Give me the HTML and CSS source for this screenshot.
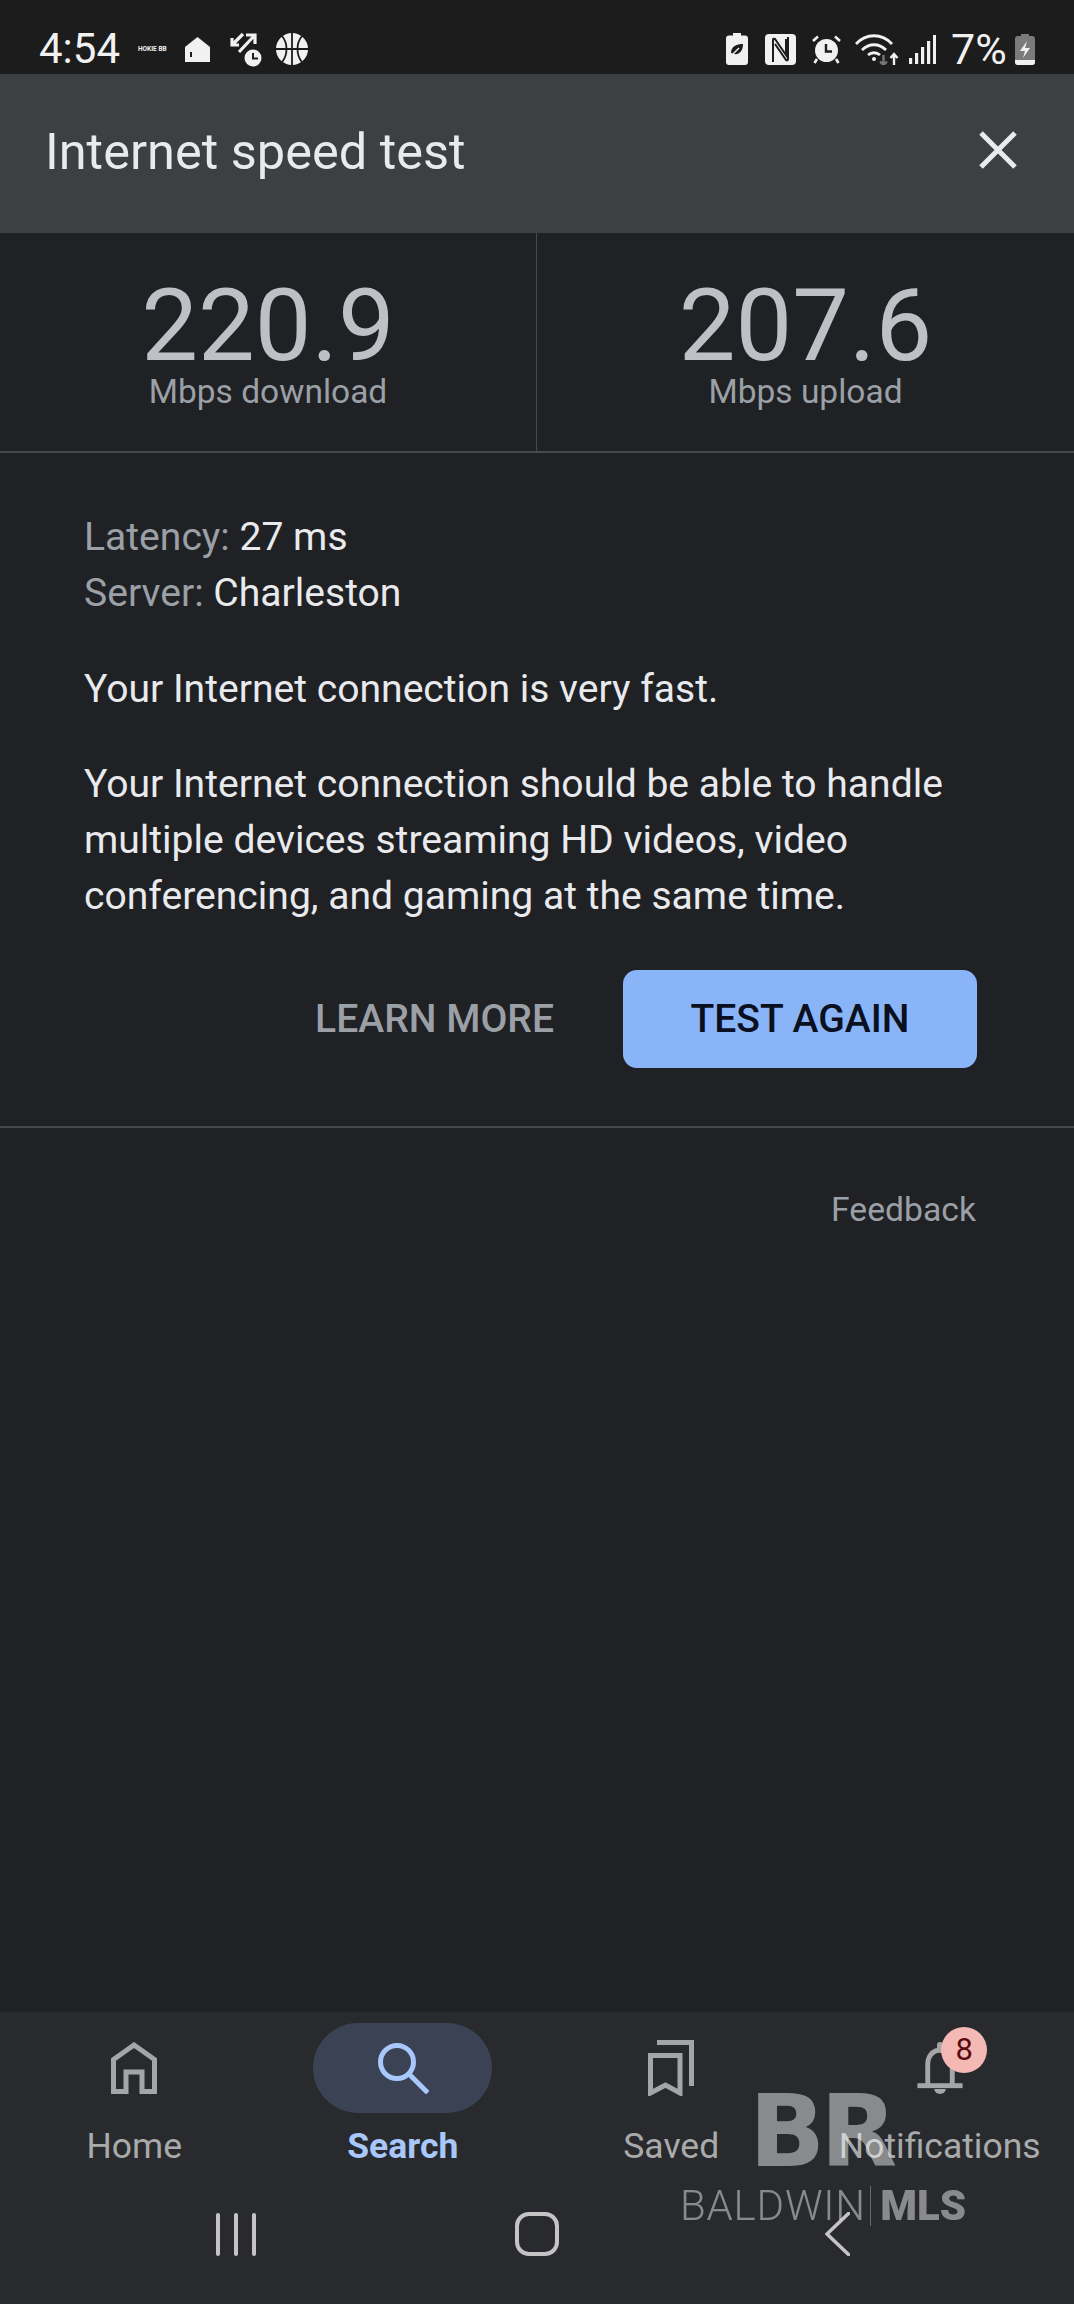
FILE: index.html
```html
<!DOCTYPE html>
<html>
<head>
<meta charset="utf-8">
<title>Internet speed test</title>
<link rel="stylesheet" href="styles.css">
</head>
<body>
<div class="page">

  <div class="statusbar">
    <div class="status-left">
      <span class="time">4:54</span>
      <span class="mini-logo">HOKIE BB</span>
      <svg class="ic-house" viewBox="0 0 25 25"><path d="M12.5 0L25 10V25H0V10Z" fill="#f1f1f1"/><rect x="5" y="15" width="2" height="5" fill="#1c1c1d"/></svg>
      <svg class="ic-transfer" viewBox="0 0 33 35" fill="none" stroke="#f1f1f1" stroke-width="3.2"><path d="M14 2L3 13M3 6V13H10"/><path d="M10 20L25 4M17 3H26V12"/><circle cx="24" cy="26" r="8.5" fill="#f1f1f1" stroke="none"/><path d="M24 21V26.5H29" stroke="#1c1c1d" stroke-width="2"/></svg>
      <svg class="ic-ball" viewBox="0 0 32 32"><circle cx="16" cy="16" r="16" fill="#f1f1f1"/><g fill="none" stroke="#1c1c1d" stroke-width="1.8"><path d="M16 0V32M0 16H32"/><path d="M6 3C12 10 12 22 6 29"/><path d="M26 3C20 10 20 22 26 29"/></g></svg>
    </div>
    <div class="status-right">
      <svg class="ic-eco" viewBox="0 0 22 32"><path d="M7 0H15V2.500H19Q22 2.500 22 5.500V29Q22 32 19 32H3Q0 32 0 29V5.500Q0 2.500 3 2.500H7Z" fill="#f1f1f1"/><path d="M5 20C5 13 11 11 17 11C17 18 13 22 8 21Z" fill="#1c1c1d"/><path d="M4 24L13 15" stroke="#f1f1f1" stroke-width="1.500"/></svg>
      <svg class="ic-nfc" viewBox="0 0 31 31"><rect width="31" height="31" rx="4" fill="#f1f1f1"/><path d="M8 28V6Q8 4 10 5L21 21V5M23 3V25Q23 27 21 26L10 10" fill="none" stroke="#1c1c1d" stroke-width="2"/></svg>
      <svg class="ic-alarm" viewBox="0 0 29 29"><circle cx="14.500" cy="15.500" r="11.500" fill="#f1f1f1"/><path d="M1 6L6 1.500M28 6L23 1.500M5 24L2.500 28M24 24L26.500 28" stroke="#f1f1f1" stroke-width="2.600" fill="none"/><path d="M14 9V16.500H20" stroke="#1c1c1d" stroke-width="2.400" fill="none"/></svg>
      <svg class="ic-wifi" viewBox="0 0 44 31" fill="none"><path d="M1 10C11 -1 27 -1 37 10" stroke="#f1f1f1" stroke-width="2.800"/><path d="M7 16C14 9 24 9 31 16" stroke="#f1f1f1" stroke-width="2.800"/><path d="M13 21C16.500 18 21.500 18 25 21" stroke="#f1f1f1" stroke-width="2.800"/><circle cx="19" cy="25" r="2" fill="#f1f1f1"/><path d="M28.500 21V31M25 27.500L28.500 31L32 27.500" stroke="#777" stroke-width="2.400"/><path d="M39 31V20M35.500 24L39 20L42.500 24" stroke="#f1f1f1" stroke-width="2.400"/></svg>
      <svg class="ic-signal" viewBox="0 0 27 29" fill="#f1f1f1"><rect x="0" y="23" width="3.200" height="6"/><rect x="6" y="18" width="3.200" height="11"/><rect x="12" y="12" width="3.200" height="17"/><rect x="18" y="6" width="3.200" height="23"/><rect x="24" y="0" width="3" height="29"/></svg>
      <span class="percent">7%</span>
      <svg class="ic-battery" viewBox="0 0 20 31"><path d="M6 0H14V2H17Q20 2 20 5V28Q20 31 17 31H3Q0 31 0 28V5Q0 2 3 2H6Z" fill="#7b7b7b"/><path d="M0 26H20V28Q20 31 17 31H3Q0 31 0 28Z" fill="#f1f1f1"/><path d="M12 7L5 17H10L8 24L15 14H10Z" fill="#f1f1f1"/></svg>
    </div>
  </div>

  <div class="appbar">
    <div class="appbar-title">Internet speed test</div>
    <svg class="ic-close" viewBox="0 0 38 38"><path d="M2 2L36 36M36 2L2 36" stroke="#e8eaed" stroke-width="5" fill="none"/></svg>
  </div>

  <div class="content">
    <div class="stats">
      <div class="stat">
        <div class="stat-num">220.9</div>
        <div class="stat-label">Mbps download</div>
      </div>
      <div class="stat">
        <div class="stat-num">207.6</div>
        <div class="stat-label">Mbps upload</div>
      </div>
    </div>

    <div class="details">
      <p class="meta"><span class="dim">Latency:</span> 27 ms<br><span class="dim">Server:</span> Charleston</p>
      <p>Your Internet connection is very fast.</p>
      <p>Your Internet connection should be able to handle multiple devices streaming HD videos, video conferencing, and gaming at the same time.</p>
      <div class="actions">
        <span class="learn">LEARN MORE</span>
        <span class="again">TEST AGAIN</span>
      </div>
    </div>

    <div class="feedback">Feedback</div>
  </div>

  <div class="bottom">
    <div class="tabs">
      <div class="tab">
        <div class="tab-icon">
          <svg class="ic-tab" viewBox="0 0 46 52" fill="none" stroke="#a4a5a6" stroke-width="5"><path d="M2.500 49.500V17.500L23 3L43.500 17.500V49.500H31V30H15V49.500Z"/></svg>
        </div>
        <div class="tab-label">Home</div>
      </div>
      <div class="tab on">
        <div class="tab-icon">
          <svg class="ic-tab ic-search" viewBox="0 0 52 52" fill="none" stroke="#a8c7fa" stroke-width="5"><circle cx="20" cy="20" r="16.500"/><path d="M32 32L49 49" stroke-linecap="square"/></svg>
        </div>
        <div class="tab-label">Search</div>
      </div>
      <div class="tab">
        <div class="tab-icon">
          <svg class="ic-tab ic-saved" viewBox="0 0 46 56" fill="none" stroke="#a4a5a6" stroke-width="5"><path d="M9 2.500H43.500V46"/><path d="M2.500 15.500H32V53L17.500 45L2.500 53Z"/></svg>
        </div>
        <div class="tab-label">Saved</div>
      </div>
      <div class="tab">
        <div class="tab-icon">
          <svg class="ic-tab" viewBox="0 0 46 53" fill="#a4a5a6"><path d="M8 43V23C8 13 14 7 20 6V3Q20 0 23 0T26 3V6C32 7 38 13 38 23V43H33V23C33 16 29 11 23 11S13 16 13 23V43Z"/><rect x="0" y="42" width="46" height="5"/><path d="M17 48H29Q28 53 23 53T17 48Z"/></svg>
          <span class="badge">8</span>
        </div>
        <div class="tab-label">Notifications</div>
      </div>
    </div>
    <div class="syskeys">
      <div class="syskey">
        <div class="recents"><i></i><i></i><i></i></div>
      </div>
      <div class="syskey"><div class="sys-home"></div></div>
      <div class="syskey">
        <svg class="ic-back" viewBox="0 0 25 44" fill="none"><path d="M23.500 1.500L2 22L23.500 42.500" stroke="#c4c4c4" stroke-width="3.600" stroke-linecap="round"/></svg>
      </div>
    </div>
    <div class="watermark">
      <div class="wm-logo">BR</div>
      <div class="wm-name"><span class="wm-thin">BALDWIN</span><span class="wm-bold">MLS</span></div>
    </div>
  </div>

</div>
</body>
</html>
```

FILE: styles.css
```css
html, body {
    margin: 0;
    padding: 0;
    background: #202124;
}
.page {
    width: 1074px;
    height: 2304px;
    display: flex;
    flex-direction: column;
    font-family: Roboto, "Liberation Sans", sans-serif;
    overflow: hidden;
}

/* status bar */
.statusbar {
    height: 74px;
    flex: none;
    background: #1c1c1d;
    display: flex;
    justify-content: space-between;
    align-items: center;
    padding: 24px 39px 0;
    box-sizing: border-box;
    color: #f1f1f1;
}
.status-left, .status-right {
    display: flex;
    align-items: center;
}
.time {
    font-size: 42px;
    line-height: 46px;
    width: 80px;
}
.percent {
    font-size: 43px;
    line-height: 46px;
    width: 56px;
    margin-left: 15px;
    white-space: nowrap;
}
.mini-logo {
    font-size: 6.500px;
    font-weight: 700;
    width: 29px;
    margin-left: 19px;
    white-space: nowrap;
    overflow: hidden;
}
.ic-house { width: 25px; height: 25px; margin-left: 18px; }
.ic-transfer { width: 33px; height: 35px; margin-left: 19px; }
.ic-ball { width: 32px; height: 32px; margin-left: 14px; }
.ic-eco { width: 22px; height: 32px; }
.ic-nfc { width: 31px; height: 31px; margin-left: 17px; }
.ic-alarm { width: 29px; height: 29px; margin-left: 16px; }
.ic-wifi { width: 44px; height: 31px; margin-left: 14px; }
.ic-signal { width: 27px; height: 29px; margin-left: 10px; }
.ic-battery { width: 20px; height: 31px; margin-left: 8px; }

/* app bar */
.appbar {
    height: 159px;
    flex: none;
    background: #3c4043;
    display: flex;
    justify-content: space-between;
    align-items: center;
    padding: 0 57px 4px 45px;
    box-sizing: border-box;
}
.appbar-title {
    font-size: 50.500px;
    color: #e8eaed;
}
.ic-close {
    width: 38px;
    height: 38px;
    margin-bottom: 4px;
}

/* results */
.content {
    flex: 1;
    background: #202124;
}
.stats {
    display: grid;
    grid-template-columns: 1fr 1fr;
    border-bottom: 2px solid #47494c;
    height: 220px;
    box-sizing: border-box;
}
.stat {
    text-align: center;
    padding-top: 46px;
}
.stat:first-child {
    border-right: 1px solid #47494c;
}
.stat-num {
    font-size: 101px;
    line-height: 94px;
    color: #bdc1c6;
}
.stat-label {
    font-size: 33.500px;
    line-height: 37px;
    color: #9aa0a6;
}
.details {
    padding: 56px 97px 58px 84px;
    border-bottom: 2px solid #47494c;
    font-size: 39.100px;
    line-height: 56px;
    color: #e8eaed;
}
.details p {
    margin: 0 0 39.500px;
}
.dim {
    color: #9aa0a6;
}
.actions {
    display: flex;
    justify-content: flex-end;
    align-items: center;
    gap: 69px;
    margin-top: 46px;
    font-weight: 500;
}
.learn {
    color: #9aa0a6;
}
.again {
    width: 354px;
    height: 98px;
    line-height: 98px;
    text-align: center;
    background: #8ab4f8;
    border-radius: 14px;
    color: #0b1020;
}
.feedback {
    padding: 60px 98px 0 0;
    text-align: right;
    font-size: 33.700px;
    line-height: 44px;
    color: #9aa0a6;
}

/* bottom nav */
.bottom {
    height: 292px;
    flex: none;
    background: #292a2d;
    position: relative;
}
.tabs {
    display: grid;
    grid-template-columns: repeat(4, 1fr);
    padding-top: 11px;
}
.tab {
    display: flex;
    flex-direction: column;
    align-items: center;
}
.tab-icon {
    width: 179px;
    height: 90px;
    border-radius: 45px;
    display: flex;
    align-items: center;
    justify-content: center;
    position: relative;
}
.ic-tab {
    width: 46px;
    height: 52px;
}
.ic-search {
    width: 52px;
}
.ic-saved {
    height: 56px;
}
.tab.on .tab-icon {
    background: #3a4254;
}
.tab-label {
    margin-top: 11px;
    font-size: 35.500px;
    line-height: 44px;
    color: #a9aaab;
}
.tab.on .tab-label {
    color: #a8c7fa;
    font-weight: 700;
}
.badge {
    position: absolute;
    left: 91px;
    top: 4px;
    width: 46px;
    height: 46px;
    border-radius: 50%;
    background: #f5b9b5;
    color: #5a0a10;
    font-size: 31px;
    line-height: 46px;
    text-align: center;
}
.syskeys {
    display: grid;
    grid-template-columns: repeat(3, 301px);
    padding: 44px 0 0 85px;
}
.syskey {
    display: flex;
    justify-content: center;
    align-items: center;
    height: 44px;
}
.recents {
    display: flex;
    gap: 14px;
}
.recents i {
    display: block;
    width: 4px;
    height: 43px;
    border-radius: 2px;
    background: #c4c4c4;
}
.sys-home {
    width: 44px;
    height: 44px;
    box-sizing: border-box;
    border: 4px solid #c4c4c4;
    border-radius: 14px;
}
.ic-back {
    width: 25px;
    height: 44px;
}

/* watermark over the nav */
.watermark {
    position: absolute;
    left: 680px;
    top: 76px;
    width: 286px;
    color: rgba(255, 255, 255, 0.45);
    filter: blur(0.5px);
}
.wm-logo {
    margin-left: 69px;
    font-family: "DejaVu Sans", sans-serif;
    font-weight: 700;
    font-size: 100px;
    line-height: 80px;
    letter-spacing: -5px;
    padding-top: 4px;
}
.wm-name {
    display: flex;
    align-items: center;
    margin-top: 14px;
    font-size: 42px;
    line-height: 40px;
}
.wm-thin {
    font-weight: 300;
    width: 191px;
    letter-spacing: 0.800px;
    white-space: nowrap;
    border-right: 1px solid rgba(255, 255, 255, 0.3);
}
.wm-bold {
    font-weight: 900;
    margin-left: 9px;
}
```
